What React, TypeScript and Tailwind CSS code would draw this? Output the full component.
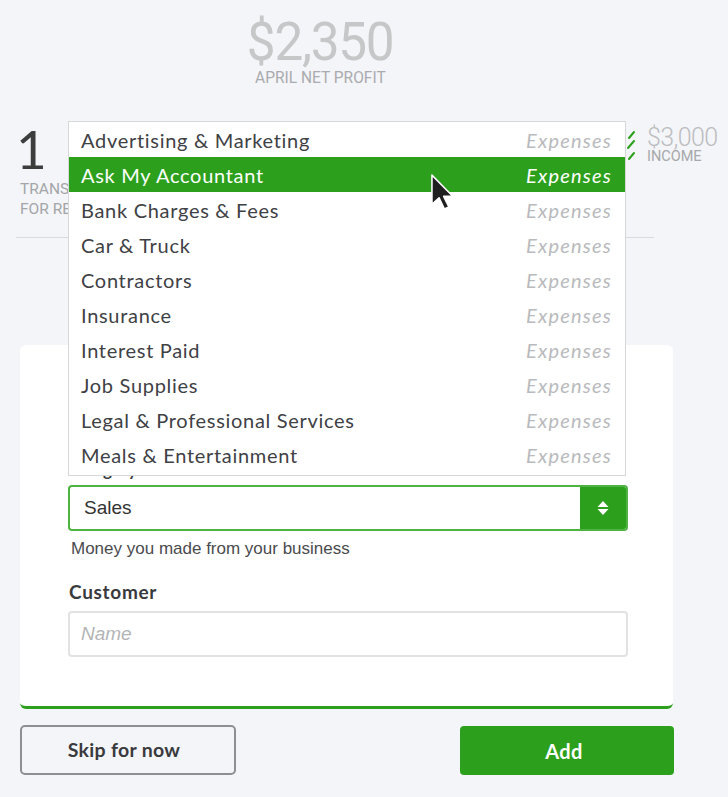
import { useState } from 'react'

const categories = [
  'Advertising & Marketing',
  'Ask My Accountant',
  'Bank Charges & Fees',
  'Car & Truck',
  'Contractors',
  'Insurance',
  'Interest Paid',
  'Job Supplies',
  'Legal & Professional Services',
  'Meals & Entertainment',
]

function Cursor() {
  return (
    <svg width="26" height="38" viewBox="0 0 20 29" className="absolute left-[430px] top-[173px] z-20">
      <path
        d="M1.5 1.5 L1.5 24 L7 19 L11 27.5 L14.5 26 L10.5 17.8 L17.5 17.8 Z"
        fill="#1f1f1f"
        stroke="#ffffff"
        strokeWidth="1.2"
        strokeLinejoin="round"
      />
    </svg>
  )
}

export default function App() {
  const [active, setActive] = useState(1)

  return (
    <div className="relative w-[728px] h-[797px] overflow-hidden bg-[#f4f5f8] font-['Lato',sans-serif]">
      {/* Net profit header */}
      <div className="w-[640px] pt-[18px] flex flex-col items-center">
        <div className="text-[54px] leading-[48px] text-[#c6c7c9] font-['Roboto',sans-serif] scale-x-[0.95] tracking-tight">
          $2,350
        </div>
        <div className="mt-[4px] text-[16px] leading-[16px] text-[#a9abae] font-['Roboto',sans-serif] scale-x-[0.97]">
          APRIL NET PROFIT
        </div>
      </div>

      {/* Stats row */}
      <div className="mt-[36px] flex pl-[16px]">
        <div className="flex flex-col">
          <div className="text-[53px] leading-[53px] text-[#3d3d3d]">1</div>
          <div className="mt-[4px] pl-[4px] text-[15.5px] leading-[20px] text-[#a3a5a8] font-['Roboto',sans-serif] uppercase">
            <div>Transactions</div>
            <div>For review</div>
          </div>
        </div>
        <div className="ml-auto flex items-start pt-[4px]">
          <svg width="12" height="34" viewBox="0 0 12 34" className="mt-[4px]">
            <path d="M4 8 L9 2 M3 18 L9 11 M4 29 L9 23" stroke="#2ca01c" strokeWidth="2" strokeLinecap="round" />
          </svg>
          <div className="ml-[10px] w-[81px] whitespace-nowrap">
            <div className="text-[25px] leading-[24px] text-[#bcbdc0] font-['Roboto',sans-serif] font-light tracking-tight">$3,000</div>
            <div className="text-[14.5px] leading-[14px] text-[#a6a8ab] font-['Roboto',sans-serif]">INCOME</div>
          </div>
        </div>
      </div>
      <div className="mt-[18px] ml-[16px] w-[638px] h-px bg-[#d8dadd]" />

      {/* Card */}
      <div className="mt-[107px] ml-[20px] w-[653px] bg-white rounded-[6px] border-b-[3px] border-[#2ca01c] pl-[48px] pr-[45px] pt-[115px] pb-[49px]">
        <div className="text-[17px] leading-[20px] font-bold text-[#393a3d]">Category</div>
        <div className="mt-[5px] flex h-[46px] rounded-[4px] border-2 border-[#4fb342] overflow-hidden">
          <div className="flex-1 flex items-center pl-[14px] text-[19px] text-[#333] font-['Liberation_Sans',sans-serif]">
            Sales
          </div>
          <div className="w-[46px] bg-[#2ca01c] flex flex-col items-center justify-center gap-[3px]">
            <svg width="12" height="16" viewBox="0 0 12 16">
              <path d="M6 1 L11.5 7 L0.5 7 Z M0.5 9 L11.5 9 L6 15 Z" fill="#ffffff" />
            </svg>
          </div>
        </div>
        <div className="mt-[9px] pl-[3px] text-[17px] leading-[18px] text-[#4a4b4e] font-['Liberation_Sans',sans-serif]">
          Money you made from your business
        </div>
        <div className="mt-[23px] pl-[1px] text-[19px] leading-[22px] font-bold tracking-[0.7px] text-[#393a3d]">Customer</div>
        <div className="mt-[8px] h-[46px] rounded-[4px] border-2 border-[#e1e2e4] flex items-center pl-[11px] text-[19px] italic text-[#b3b4b6] font-['Liberation_Sans',sans-serif]">
          Name
        </div>
      </div>

      {/* Buttons */}
      <div className="mt-[16px] flex justify-between pl-[20px] pr-[54px]">
        <button className="w-[216px] h-[50px] pr-[8px] rounded-[5px] border-2 border-[#8d8f92] text-[19.5px] font-bold tracking-[0.3px] text-[#393a3d]">
          Skip for now
        </button>
        <button className="w-[214px] h-[49px] mt-[1px] pr-[6px] rounded-[4px] bg-[#2ca01c] text-[20px] font-bold tracking-[0.4px] text-white">
          Add
        </button>
      </div>

      {/* Category dropdown menu */}
      <div className="absolute left-[68px] top-[121px] z-10 w-[558px] bg-white border border-[#d6d7d9] pb-[3px]">
        {categories.map((name, i) => (
          <div
            key={name}
            onMouseEnter={() => setActive(i)}
            className={`h-[35px] flex items-center justify-between pl-[12px] pr-[13px] text-[20px] tracking-[0.7px] ${
              active === i ? 'bg-[#2ca01c] text-white' : 'text-[#404145]'
            }`}
          >
            <span>{name}</span>
            <span className={`italic tracking-[1.2px] ${active === i ? 'text-white' : 'text-[#b9babd]'}`}>Expenses</span>
          </div>
        ))}
      </div>

      <Cursor />
    </div>
  )
}
